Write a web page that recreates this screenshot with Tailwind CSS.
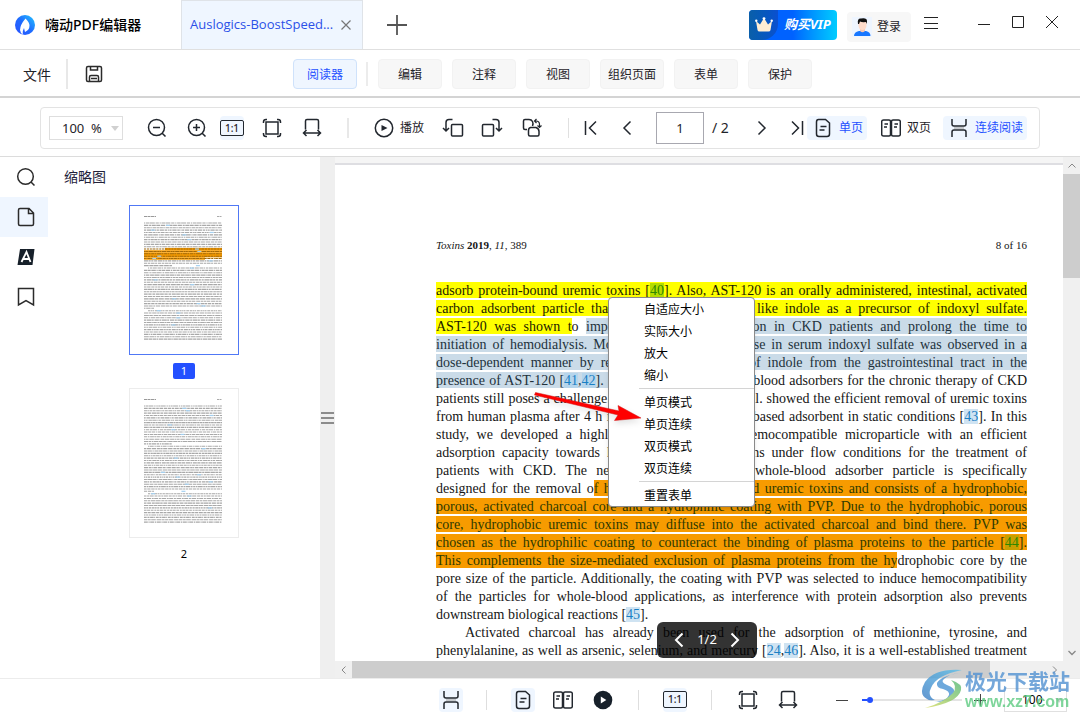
<!DOCTYPE html>
<html lang="zh-CN">
<head>
<meta charset="utf-8">
<title>嗨动PDF编辑器</title>
<script src="https://cdn.jsdelivr.net/npm/@tailwindcss/browser@4"></script>
</head>
<body class="h-screen flex flex-col overflow-hidden bg-white text-[#1f2329] text-xs font-['Noto_Sans','Noto_Sans_CJK_SC',sans-serif]">

<!-- Icon set -->
<svg class="absolute size-0" aria-hidden="true">
  <defs>
    <linearGradient id="logoGrad" x1="0" y1="1" x2="1" y2="0"><stop offset="0" stop-color="#2a50ff"/><stop offset=".5" stop-color="#1f6bff"/><stop offset="1" stop-color="#22c8ff"/></linearGradient>
    <linearGradient id="swirlBlue" x1="0" y1="1" x2="1" y2="0"><stop offset="0" stop-color="#3a7cc4"/><stop offset="1" stop-color="#5cc0ea"/></linearGradient>
    <linearGradient id="swirlGreen" x1="0" y1="1" x2="1" y2="0"><stop offset="0" stop-color="#d8dc60"/><stop offset="1" stop-color="#4fb878"/></linearGradient>
    <symbol id="i-minus" viewBox="0 0 20 20"><circle cx="9.5" cy="9.5" r="8"/><path d="M6 9.500h7M15.200 15.200l3.300 3.300"/></symbol>
    <symbol id="i-plus" viewBox="0 0 20 20"><circle cx="9.500" cy="9.500" r="8"/><path d="M6 9.500h7M9.500 6v7M15.200 15.200l3.300 3.300"/></symbol>
    <symbol id="i-fit" viewBox="0 0 20 20"><rect x="4" y="4" width="12" height="12"/><path d="M1.500 5V4q0-2.500 2.500-2.500h1M15 1.500h1q2.500 0 2.500 2.500v1M18.500 15v1q0 2.500-2.500 2.500h-1M5 18.500H4q-2.500 0-2.500-2.500v-1"/></symbol>
    <symbol id="i-width" viewBox="0 0 20 20"><path d="M3.500 11.500V3q0-1.500 1.500-1.500h10q1.500 0 1.500 1.500v8.500M1.500 15h17M4.500 12l-3 3 3 3M15.500 12l3 3-3 3"/></symbol>
    <symbol id="i-page" viewBox="0 0 20 20"><path d="M5.500 1.500h7l4 3.500v11q0 2.500-2.500 2.500H6Q3.500 18.500 3.500 16V4q0-2.500 2-2.500zM7.500 8.500h6M6.500 12h5"/></symbol>
    <symbol id="i-double" viewBox="0 0 20 20"><path d="M2.500 2H8q1.500 0 1.500 1.500v13Q9.500 18 8 18H2.500Q.700 18 .700 16.500v-13Q.700 2 2.500 2zM12 2h5.500q1.800 0 1.800 1.500v13q0 1.500-1.800 1.500H12q-1.500 0-1.500-1.500v-13Q10.500 2 12 2zM3.500 6h3.500M3 9h3M13.500 6H17M13 9h3"/></symbol>
    <symbol id="i-scroll" viewBox="0 0 20 20"><path d="M3 1v5q0 2 2 2h10q2 0 2-2V1M3 19v-5q0-2 2-2h10q2 0 2 2v5"/><path d="M5 10h10" stroke="#9a9a9a" stroke-width="1"/></symbol>
    <symbol id="i-left" viewBox="0 0 20 20"><path d="M13.500 3.500L7 10l6.500 6.500"/></symbol>
    <symbol id="i-right" viewBox="0 0 20 20"><path d="M6.500 3.500L13 10l-6.500 6.500"/></symbol>
  </defs>
</svg>

<!-- Title bar -->
<header class="h-[50px] shrink-0 flex items-stretch border-b border-[#e0e0e0]">
  <div class="w-[181px] flex items-center pl-[15px] gap-2.5">
    <svg class="size-5" viewBox="0 0 20 20"><circle cx="10" cy="10" r="10" fill="url(#logoGrad)"/><path d="M10.500 3.500Q5 10 5 15q.500 3.500 2.700 4.500-.700-3 1.300-6.500l1 4q4.500-2 4.500-6.500 0-3-4-7z" fill="#fff"/></svg>
    <h1 class="text-sm font-medium text-black">嗨动PDF编辑器</h1>
  </div>
  <div class="w-[182px] flex items-center justify-between bg-[#eff6ff] border-x border-t border-[#dfe3e8] px-2 text-[#2b50e8]">
    <span class="text-[13px] font-['Open_Sans','Noto_Sans',sans-serif]">Auslogics-BoostSpeed...</span>
    <button aria-label="关闭标签" class="size-4 flex items-center justify-center"><svg class="size-2.5" viewBox="0 0 10 10" stroke="#777" stroke-width="1.200"><path d="M.5.5l9 9M9.500.5l-9 9"/></svg></button>
  </div>
  <button aria-label="新建标签" class="ml-6 self-center"><svg class="size-5" viewBox="0 0 20 20" stroke="#555" stroke-width="1.800"><path d="M0 10h20M10 0v20"/></svg></button>
  <div class="ml-auto flex items-center">
    <button class="h-[30px] w-[88px] rounded overflow-hidden flex items-center bg-linear-to-r from-[#0062ff] from-50% to-[#00ccff] text-white">
      <span class="w-[29px] h-full rounded-br-2xl bg-linear-to-r from-[#0b5fa8] to-[#0b4fd0] flex items-center justify-center">
        <svg class="w-[18px] h-4" viewBox="0 0 18 16"><path d="M1 4l4 3.500L9 1l4 6.500L17 4l-1.500 9q-.300 1.500-2 1.500h-9q-1.700 0-2-1.500z" fill="#ffeed4"/><circle cx="1.300" cy="3.800" r="1.200" fill="#fff"/><circle cx="9" cy="1.600" r="1.400" fill="#fff"/><circle cx="16.700" cy="3.800" r="1.200" fill="#fff"/></svg>
      </span>
      <span class="pl-1.5 text-[13px] font-bold italic whitespace-nowrap">购买VIP</span>
    </button>
    <button class="ml-2.5 h-[30px] w-16 mt-1 rounded bg-[#f7f7f7] flex items-center pl-[5px] gap-[5px]">
      <svg class="size-5 bg-[#eef5ff]" viewBox="0 0 20 20"><path d="M2 19q0-4 5-5h7q4.500 1 4.500 5z" fill="#1877ff"/><path d="M8 11h5v3q-2.500 2.500-5 0z" fill="#f6c8b4"/><path d="M6.500 5h8v4q-.500 4-4 4t-4-4z" fill="#ffdccb"/><path d="M6 7Q5 1 9 1.500q6-1 6 2.500v3l-1-2q-4 .500-6-.500l-1 2.500z" fill="#111"/></svg>
      <span>登录</span>
    </button>
    <button aria-label="菜单" class="ml-[13px] mb-1"><svg class="w-[14px] h-3" viewBox="0 0 14 12" stroke="#222" stroke-width="1"><path d="M0 .5h14M0 6.500h14M0 11.500h14"/></svg></button>
    <button aria-label="最小化" class="ml-10"><svg class="size-3" viewBox="0 0 12 12" stroke="#222"><path d="M0 5.500h12"/></svg></button>
    <button aria-label="最大化" class="ml-[22px] mb-1.5"><svg class="size-3" viewBox="0 0 12 12" fill="none" stroke="#222"><path d="M.5.5h11v11H.500z"/></svg></button>
    <button aria-label="关闭" class="ml-[22px] mr-[22px] mb-1.5"><svg class="size-3" viewBox="0 0 12 12" stroke="#222"><path d="M0 0l12 12M12 0L0 12"/></svg></button>
  </div>
</header>

<!-- Mode tabs -->
<nav class="h-12 shrink-0 flex items-center border-b-2 border-[#d4d4d4] pt-0.5">
  <button class="w-[66px] pl-2 pt-0.5 text-sm">文件</button>
  <span class="w-0.5 h-[30px] bg-[#e8e8e8]"></span>
  <button aria-label="保存" class="ml-[17px]"><svg class="size-[18px]" viewBox="0 0 18 18" fill="none" stroke="#2b2b2b" stroke-width="1.500"><path d="M1.500 3q0-1.500 1.500-1.500h12q1.500 0 1.500 1.500v12q0 1.500-1.500 1.500H3q-1.500 0-1.500-1.500zM4.500 16v-4q0-1.500 1.500-1.500h6q1.500 0 1.500 1.500v4M5.500 2v3h7V2M6 13.500h6"/></svg></button>
  <button class="ml-[190px] w-16 h-[30px] pt-px rounded bg-[#eff6ff] border border-[#cfe2fb] text-[#2450ff]">阅读器</button>
  <span class="ml-[9px] mr-2.5 w-0.5 h-6 bg-[#ececec]"></span>
  <div class="flex gap-2.5">
    <button class="w-16 h-[30px] pt-px rounded bg-[#f7f7f7] border border-[#f2f2f2]">编辑</button>
    <button class="w-16 h-[30px] pt-px rounded bg-[#f7f7f7] border border-[#f2f2f2]">注释</button>
    <button class="w-16 h-[30px] pt-px rounded bg-[#f7f7f7] border border-[#f2f2f2]">视图</button>
    <button class="w-16 h-[30px] pt-px rounded bg-[#f7f7f7] border border-[#f2f2f2]">组织页面</button>
    <button class="w-16 h-[30px] pt-px rounded bg-[#f7f7f7] border border-[#f2f2f2]">表单</button>
    <button class="w-16 h-[30px] pt-px rounded bg-[#f7f7f7] border border-[#f2f2f2]">保护</button>
  </div>
</nav>

<!-- Reader toolbar -->
<div class="h-[59px] shrink-0 flex items-center border-b border-[#dcdcdc] px-10 pt-px">
  <div class="w-full h-[42px] flex items-center whitespace-nowrap rounded border border-[#e3e3e3] pl-2 pr-2 fill-none stroke-[#22272e] stroke-[1.5]">
    <div class="relative flex items-center">
      <select aria-label="缩放比例" class="appearance-none w-[74px] h-6 border border-[#dedede] pl-3 text-[13px] leading-5"><option>100&nbsp; %</option></select>
      <span class="absolute right-1 top-2.5 border-x-4 border-x-transparent border-t-[5px] border-t-[#d0d0d0]"></span>
    </div>
    <button aria-label="缩小" class="ml-6"><svg class="size-5"><use href="#i-minus"/></svg></button>
    <button aria-label="放大" class="ml-5"><svg class="size-5"><use href="#i-plus"/></svg></button>
    <button aria-label="实际大小" class="ml-[13px] w-6 h-6 rounded bg-[#eff6ff] flex items-center"><span class="w-6 h-4 border-[1.5px] border-[#22272e] rounded-[2px] text-[10px] leading-3.5 font-medium">1:1</span></button>
    <button aria-label="适应页面" class="ml-[18px]"><svg class="size-5"><use href="#i-fit"/></svg></button>
    <button aria-label="适应宽度" class="ml-5"><svg class="size-5"><use href="#i-width"/></svg></button>
    <span class="ml-[25px] w-0.5 h-5 bg-[#e8e8e8]"></span>
    <button class="ml-[25px] flex items-center gap-1.5"><svg class="size-5" viewBox="0 0 20 20"><circle cx="10" cy="10" r="8.700"/><path d="M7.500 7v6l6-3z" fill="#22272e" stroke="none"/></svg><span class="pt-px">播放</span></button>
    <button aria-label="向左旋转" class="ml-[18px]"><svg class="w-[22px] h-5" viewBox="0 0 22 20"><rect x="9.500" y="6.500" width="11" height="11.500" rx="1"/><path d="M10.500 1.500H7Q4 1.500 4 4.500V13M1 10l3 3 3-3"/></svg></button>
    <button aria-label="向右旋转" class="ml-[17px]"><svg class="w-[22px] h-5" viewBox="0 0 22 20"><rect x="1.500" y="6.500" width="11" height="11.500" rx="1"/><path d="M11.500 1.500H15q3 0 3 3V13M15 10l3 3 3-3"/></svg></button>
    <button aria-label="旋转页面" class="ml-[19px]"><svg class="size-5" viewBox="0 0 20 20"><path d="M5 11.500H3Q1.500 11.500 1.500 10V3Q1.500 1.500 3 1.500h4q2.500 0 3.500 2t0 4.500M8.500 9.500H14q3 1 3 4v3q0 1.500-1.500 1.500H8q-1.500 0-1.500-1.500v-4q0-2.500 2-3z"/><path d="M13 3h1q3.500 0 3.500 3.500V9M14.500 1L12.500 3l2 2M15.500 7.500l2 2 2-2" stroke-width="1.200"/></svg></button>
    <span class="ml-[26px] w-px h-5 bg-[#e0e0e0]"></span>
    <button aria-label="第一页" class="ml-3"><svg class="size-5" viewBox="0 0 20 20"><path d="M4.500 3v14M15 3.500L8.500 10l6.500 6.500"/></svg></button>
    <button aria-label="上一页" class="ml-4"><svg class="size-5"><use href="#i-left"/></svg></button>
    <input aria-label="页码" value="1" class="ml-[19px] w-12 h-8 border border-[#a8a8b0] text-center text-[13px] leading-5">
    <span class="ml-2 w-6 text-sm">/ 2</span>
    <button aria-label="下一页" class="ml-4"><svg class="size-5"><use href="#i-right"/></svg></button>
    <button aria-label="最后一页" class="ml-[15px]"><svg class="size-5" viewBox="0 0 20 20"><path d="M15.500 3v14M5 3.500l6.500 6.500L5 16.500"/></svg></button>
    <button class="w-[60px] h-6 rounded bg-[#eff6ff] text-[#2450ff] flex items-center pl-1.5 gap-1.5"><svg class="size-5 shrink-0"><use href="#i-page"/></svg><span class="pt-px">单页</span></button>
    <button class="ml-3.5 h-6 flex items-center gap-1.5"><svg class="size-5 shrink-0"><use href="#i-double"/></svg><span class="pt-px">双页</span></button>
    <button class="ml-3 w-[84px] h-6 rounded bg-[#eff6ff] text-[#2450ff] flex items-center pl-1.5 gap-1.5"><svg class="size-5 shrink-0"><use href="#i-scroll"/></svg><span class="pt-px">连续阅读</span></button>
  </div>
</div>

<main class="flex-1 min-h-0 flex">
  <!-- Side rail -->
  <div class="w-12 shrink-0 flex flex-col fill-none stroke-[#2b2b2b] stroke-[1.5]">
    <button aria-label="搜索" class="h-10 flex items-center justify-center pl-1"><svg class="size-5" viewBox="0 0 20 20"><circle cx="9.500" cy="9.500" r="7.800"/><path d="M15 15l3.500 3.500"/></svg></button>
    <button aria-label="缩略图" class="h-10 flex items-center justify-center pl-1 bg-[#eff6ff]"><svg class="size-5" viewBox="0 0 20 20"><path d="M4 1.500h9L17.500 6v11q0 1.500-1.500 1.500H4q-1.500 0-1.500-1.500V3Q2.500 1.500 4 1.500zM12.500 2v4.500h5"/></svg></button>
    <button aria-label="注释列表" class="h-10 flex items-center justify-center pl-1"><svg class="size-5" viewBox="0 0 20 20"><path d="M4 2h14.500l-2 16H1.500z" fill="#17202a" stroke="none"/><path d="M5.500 15L10.500 5l4 10M7.500 12h6" stroke="#fff" stroke-width="1.800"/></svg></button>
    <button aria-label="书签" class="h-10 flex items-center justify-center pl-1"><svg class="size-5" viewBox="0 0 20 20"><path d="M2.500 1.500h15v16.500L10 13.500 2.500 18z"/></svg></button>
  </div>

  <!-- Thumbnails -->
  <aside class="w-[272px] shrink-0">
    <h2 class="pt-2.5 pl-4 text-sm leading-5 text-[#22223a]">缩略图</h2>
    <div class="mt-[18px] flex flex-col items-center">
      <button class="w-[110px] h-[150px] border border-[#5078f5] bg-white"><svg class="thumb w-full h-full" viewBox="0 0 108 148" data-page="1"></svg></button>
      <span class="mt-2 w-[22px] h-4 rounded-xs bg-[#2450ff] text-white text-[11px] leading-4 text-center">1</span>
      <button class="mt-[9px] w-[110px] h-[150px] border border-[#ececec] bg-white"><svg class="thumb w-full h-full" viewBox="0 0 108 148" data-page="2"></svg></button>
      <span class="mt-2 text-[11px] leading-4 text-black">2</span>
    </div>
  </aside>

  <!-- Splitter -->
  <div class="w-[15px] shrink-0 bg-[#efefef] flex flex-col justify-center gap-[3px] px-px">
    <span class="h-0.5 bg-[#8c8c8c]"></span><span class="h-0.5 bg-[#8c8c8c]"></span><span class="h-0.5 bg-[#8c8c8c]"></span>
  </div>

  <!-- Document -->
  <section class="relative flex-1 min-w-0 flex flex-col">
    <div class="flex-1 min-h-0 flex">
      <article class="flex-1 min-w-0 overflow-hidden bg-white text-[#151515] font-['Liberation_Serif',serif]">
        <div class="h-2 bg-[#f5f5f5] border-b-2 border-[#dedee2]"></div>
        <div class="pl-[101px] pr-9 pt-[72px]">
          <div class="flex justify-between text-[11px] leading-4"><span><i>Toxins</i> <b>2019</b>, <i>11</i>, 389</span><span>8 of 16</span></div>
          <div class="mt-[29px] text-[14px] leading-[18px] text-justify [text-align-last:justify] [&_mark]:pt-px">
            <p class="h-[18px]"><mark class="bg-[#ffff00] text-[#1c1c00]">adsorb protein-bound uremic toxins [<a href="#r40" class="bg-[#b4dc00] text-[#2e8600]">40</a>]. Also, AST-120 is an orally administered, intestinal, activated</mark></p>
            <p class="h-[18px]"><mark class="bg-[#ffff00] text-[#1c1c00]">carbon adsorbent particle that binds small molecules like indole as a precursor of indoxyl sulfate.</mark></p>
            <p class="h-[18px]"><mark class="bg-[#ffff00] text-[#1c1c00]">AST-120 was shown t</mark>o <mark class="bg-[#cadbe8] text-[#22323c]">improve the renal dysfunction in CKD patients and prolong the time to</mark></p>
            <p class="h-[18px]"><mark class="bg-[#cadbe8] text-[#22323c]">initiation of hemodialysis. Moreover, a marked decrease in serum indoxyl sulfate was observed in a</mark></p>
            <p class="h-[18px]"><mark class="bg-[#cadbe8] text-[#22323c]">dose-dependent manner by reducing the net uptake of indole from the gastrointestinal tract in the</mark></p>
            <p class="h-[18px]"><mark class="bg-[#cadbe8] text-[#22323c]">presence of AST-120 [<a href="#r41" class="bg-[#b5d5ec] text-[#1a80c4]">41</a>,<a href="#r42" class="bg-[#b5d5ec] text-[#1a80c4]">42</a>]. H</mark>owever, specific whole-blood adsorbers for the chronic therapy of CKD</p>
            <p class="h-[18px]">patients still poses a challenge. Recently, Yamamoto et al. showed the efficient removal of uremic toxins</p>
            <p class="h-[18px]">from human plasma after 4 h incubation with a carbon-based adsorbent in static conditions [<a href="#r43" class="bg-[#cfe3f2] text-[#1a80c4]">43</a>]. In this</p>
            <p class="h-[18px]">study, we developed a highly selective and more hemocompatible microparticle with an efficient</p>
            <p class="h-[18px]">adsorption capacity towards hydrophobic uremic toxins under flow conditions for the treatment of</p>
            <p class="h-[18px]">patients with CKD. The newly developed special whole-blood adsorber particle is specifically</p>
            <p class="h-[18px]">designed for the removal o<mark class="bg-[#f79b00] text-[#2e3a00]">f hydrophobic protein-bound uremic toxins and consists of a hydrophobic,</mark></p>
            <p class="h-[18px]"><mark class="bg-[#f79b00] text-[#2e3a00]">porous, activated charcoal core and a hydrophilic coating with PVP. Due to the hydrophobic, porous</mark></p>
            <p class="h-[18px]"><mark class="bg-[#f79b00] text-[#2e3a00]">core, hydrophobic uremic toxins may diffuse into the activated charcoal and bind there. PVP was</mark></p>
            <p class="h-[18px]"><mark class="bg-[#f79b00] text-[#2e3a00]">chosen as the hydrophilic coating to counteract the binding of plasma proteins to the particle [<a href="#r44" class="bg-[#c8a000] text-[#2e8600]">44</a>].</mark></p>
            <p class="h-[18px]"><mark class="bg-[#f79b00] text-[#2e3a00]">This complements the size-mediated exclusion of plasma proteins from the hy</mark>drophobic core by the</p>
            <p class="h-[18px]">pore size of the particle. Additionally, the coating with PVP was selected to induce hemocompatibility</p>
            <p class="h-[18px]">of the particles for whole-blood applications, as interference with protein adsorption also prevents</p>
            <p class="h-[18px] [text-align-last:left]">downstream biological reactions [<a href="#r45" class="bg-[#cfe3f2] text-[#1a80c4]">45</a>].</p>
            <p class="h-[18px] pl-[29px]">Activated charcoal has already been used for the adsorption of methionine, tyrosine, and</p>
            <p class="h-[18px]">phenylalanine, as well as arsenic, selenium, and mercury [<a href="#r24" class="bg-[#cfe3f2] text-[#1a80c4]">24</a>,<a href="#r46" class="bg-[#cfe3f2] text-[#1a80c4]">46</a>]. Also, it is a well-established treatment</p>
          </div>
        </div>
      </article>
      <div class="w-[17px] shrink-0 bg-[#f0f0f0] flex flex-col items-center">
        <svg class="h-[17px] w-2.5 shrink-0" viewBox="0 0 10 17" fill="none" stroke="#888"><path d="M1.500 10.500L5 7l3.500 3.500"/></svg>
        <div class="w-full h-[104px] bg-[#cdcdcd]"></div>
        <svg class="mt-auto h-[17px] w-2.5 shrink-0" viewBox="0 0 10 17" fill="none" stroke="#888" stroke-width="1.300"><path d="M1.500 7L5 10.500 8.500 7"/></svg>
      </div>
    </div>
    <div class="h-[17px] shrink-0 bg-[#f0f0f0] flex items-center pr-3">
      <svg class="w-[17px] h-2.5 shrink-0" viewBox="0 0 17 10" fill="none" stroke="#888"><path d="M10.500 1.500L7 5l3.500 3.500"/></svg>
      <div class="w-[87%] h-full bg-[#cdcdcd]"></div>
      <svg class="ml-auto w-[17px] h-2.5 shrink-0" viewBox="0 0 17 10" fill="none" stroke="#888"><path d="M2 1.500L5.500 5 2 8.500"/></svg>
    </div>

    <!-- Page switcher -->
    <div class="absolute left-[322px] bottom-5 w-[100px] h-9 rounded-md bg-black/80 text-white flex items-center justify-center gap-2 text-[13px] fill-none stroke-white stroke-2">
      <button aria-label="上一页"><svg class="size-5"><use href="#i-left"/></svg></button>
      <span>1/2</span>
      <button aria-label="下一页"><svg class="size-5"><use href="#i-right"/></svg></button>
    </div>

    <!-- Context menu -->
    <div role="menu" class="absolute left-[273px] top-[140px] w-[147px] rounded border border-[#8a8a8a] bg-white shadow-md text-black flex flex-col">
      <button role="menuitem" class="h-[22px] pt-0.5 pl-[35px] text-left">自适应大小</button>
      <button role="menuitem" class="h-[22px] pt-0.5 pl-[35px] text-left">实际大小</button>
      <button role="menuitem" class="h-[22px] pt-0.5 pl-[35px] text-left">放大</button>
      <button role="menuitem" class="h-[22px] pt-0.5 pl-[35px] text-left">缩小</button>
      <hr class="my-0.5 ml-[30px] border-[#d4d4d4]">
      <button role="menuitem" class="h-[22px] pt-0.5 pl-[35px] text-left">单页模式</button>
      <button role="menuitem" class="h-[22px] pt-0.5 pl-[35px] text-left">单页连续</button>
      <button role="menuitem" class="h-[22px] pt-0.5 pl-[35px] text-left">双页模式</button>
      <button role="menuitem" class="h-[22px] pt-0.5 pl-[35px] text-left">双页连续</button>
      <hr class="my-0.5 ml-[30px] border-[#d4d4d4]">
      <button role="menuitem" class="h-[22px] pt-0.5 pl-[35px] text-left">重置表单</button>
    </div>
    <svg class="absolute left-[195px] top-[230px] w-[115px] h-10 drop-shadow-md pointer-events-none" viewBox="0 0 115 40"><path d="M5.500 5.500L89 24l-1-5.500L111 31l-26.500 2.500L88 28 4.500 8z" fill="#f00" stroke="#d01010" stroke-width=".5"/></svg>
  </section>
</main>

<!-- Status bar -->
<footer class="relative h-[42px] shrink-0 flex items-center border-t border-[#ececec] pl-[439px] pr-[13px] fill-none stroke-[#22272e] stroke-[1.5]">
  <button aria-label="连续阅读" class="size-6 rounded bg-[#eff6ff] flex items-center justify-center"><svg class="size-5"><use href="#i-scroll"/></svg></button>
  <span class="ml-[23px] w-px h-5 bg-[#dedede]"></span>
  <button aria-label="单页" class="ml-6 size-6 rounded bg-[#eff6ff] flex items-center justify-center"><svg class="size-5"><use href="#i-page"/></svg></button>
  <button aria-label="双页" class="ml-[18px]"><svg class="size-5"><use href="#i-double"/></svg></button>
  <button aria-label="播放" class="ml-5"><svg class="size-5" viewBox="0 0 20 20" stroke="none"><circle cx="10" cy="10" r="9.300" fill="#17202a"/><path d="M7.800 6.500v7l5.500-3.500z" fill="#fff"/></svg></button>
  <span class="ml-[25px] w-px h-5 bg-[#dedede]"></span>
  <button aria-label="实际大小" class="ml-6 w-6 h-6 rounded bg-[#eff6ff] flex items-center"><span class="w-6 h-[17px] border-[1.5px] border-[#22272e] rounded-[2px] text-[10px] leading-3.5 font-medium">1:1</span></button>
  <span class="ml-6 w-px h-5 bg-[#dedede]"></span>
  <button aria-label="适应页面" class="ml-[26px]"><svg class="size-5"><use href="#i-fit"/></svg></button>
  <button aria-label="适应宽度" class="ml-5"><svg class="size-5"><use href="#i-width"/></svg></button>
  <button aria-label="缩小" class="ml-auto"><svg class="size-3" viewBox="0 0 12 12" stroke="#444" stroke-width="1"><path d="M0 6.500h12"/></svg></button>
  <input type="range" aria-label="缩放" min="0" max="100" value="5" class="appearance-none ml-3.5 w-[100px] h-0.5 bg-[#e4e4e4] bg-linear-to-r from-[#2450ff] from-5% to-[#e4e4e4] to-5% [&::-webkit-slider-thumb]:appearance-none [&::-webkit-slider-thumb]:size-1.5 [&::-webkit-slider-thumb]:rounded-full [&::-webkit-slider-thumb]:bg-[#2450ff]">
  <button aria-label="放大" class="ml-3"><svg class="size-3" viewBox="0 0 12 12" stroke="#444" stroke-width="1"><path d="M0 6.500h12M6.500 0v12"/></svg></button>
  <div class="relative ml-[18px]">
    <select aria-label="缩放比例" class="appearance-none block w-[63px] h-6 border border-[#e0e0e0] pl-[17px] text-xs leading-5 text-black"><option>100</option></select>
    <span class="absolute right-1 top-2.5 border-x-4 border-x-transparent border-t-[5px] border-t-[#d0d0d0]"></span>
  </div>
  <!-- Site badge over the corner -->
  <div class="absolute right-2.5 -top-2.5 flex items-start gap-0.5 pointer-events-none stroke-none opacity-80">
    <svg class="shrink-0 w-[42px] h-10" viewBox="0 0 42 40"><path d="M41 1Q14-1 4 13q-7 12 2 17 2 2 8 1-8-4-4-12Q15 6 41 1z" fill="url(#swirlBlue)"/><path d="M39 4Q20 7 16 14q-1 5 6 6 7 2 6 6-3 7-15 6 14 3 20-7 2-6-7-9-7-3-3-6 5-5 16-6z" fill="#4a94d4"/><path d="M30 11q12 4 10 10-3 13-36 18 20-6 28-15 5-7-2-13z" fill="url(#swirlGreen)"/></svg>
    <div class="pt-px w-[105px] flex flex-col whitespace-nowrap">
      <span class="text-[21px] leading-[22px] font-bold text-[#5292d2]">极光下载站</span>
      <span class="text-[16px] leading-5 font-bold text-[#5ecb82] font-['Liberation_Sans',sans-serif]">www.xz7.com</span>
    </div>
  </div>
</footer>

<script>
// Fills the thumbnails with miniature text lines.
document.querySelectorAll('.thumb').forEach(function (svg) {
  var page = +svg.dataset.page, seed = page * 7919, out = '';
  function rnd() { seed = (seed * 16807) % 2147483647; return seed / 2147483647; }
  function line(x1, x2, y, color, w, dash) {
    out += '<path d="M' + x1 + ' ' + y + 'H' + x2 + '" stroke="' + color + '" stroke-width="' + w + '" stroke-dasharray="' + dash + '"/>';
  }
  line(14, 26, 10.5, '#999', 1, '3 .5');
  line(87, 92, 10.5, '#aaa', 1, '2 .5');
  var indents = page === 1 ? [19, 37] : [17, 37];
  for (var i = 0; i < 50; i++) {
    var y = (17 + i * 2.37).toFixed(2);
    var x1 = indents.indexOf(i) >= 0 ? 18 : 14;
    var x2 = indents.indexOf(i + 1) >= 0 ? (i > 30 ? 24 : 42) : 92;
    if (page === 1 && i >= 11 && i <= 15) {
      out += '<rect x="' + (i === 11 ? 35 : 14) + '" y="' + (y - 1.2) + '" width="' + (i === 11 ? 57 : i === 15 ? 61 : 78) + '" height="2.4" fill="#f79b00"/>';
    }
    var dash = [0, 0, 0, 0].map(function () { return (1 + rnd() * 4).toFixed(1) + ' ' + (0.4 + rnd() * 0.4).toFixed(1); }).join(' ');
    line(x1, x2, y, page === 1 && i >= 11 && i <= 15 ? '#a0690c' : '#a8a8a8', 1.1, dash);
    if (rnd() > 0.72) { var bx = 20 + rnd() * 60; line(bx, bx + 5, y, '#a4d0f0', 1.2, '4 1'); }
  }
  svg.innerHTML = out;
});
</script>
</body>
</html>
